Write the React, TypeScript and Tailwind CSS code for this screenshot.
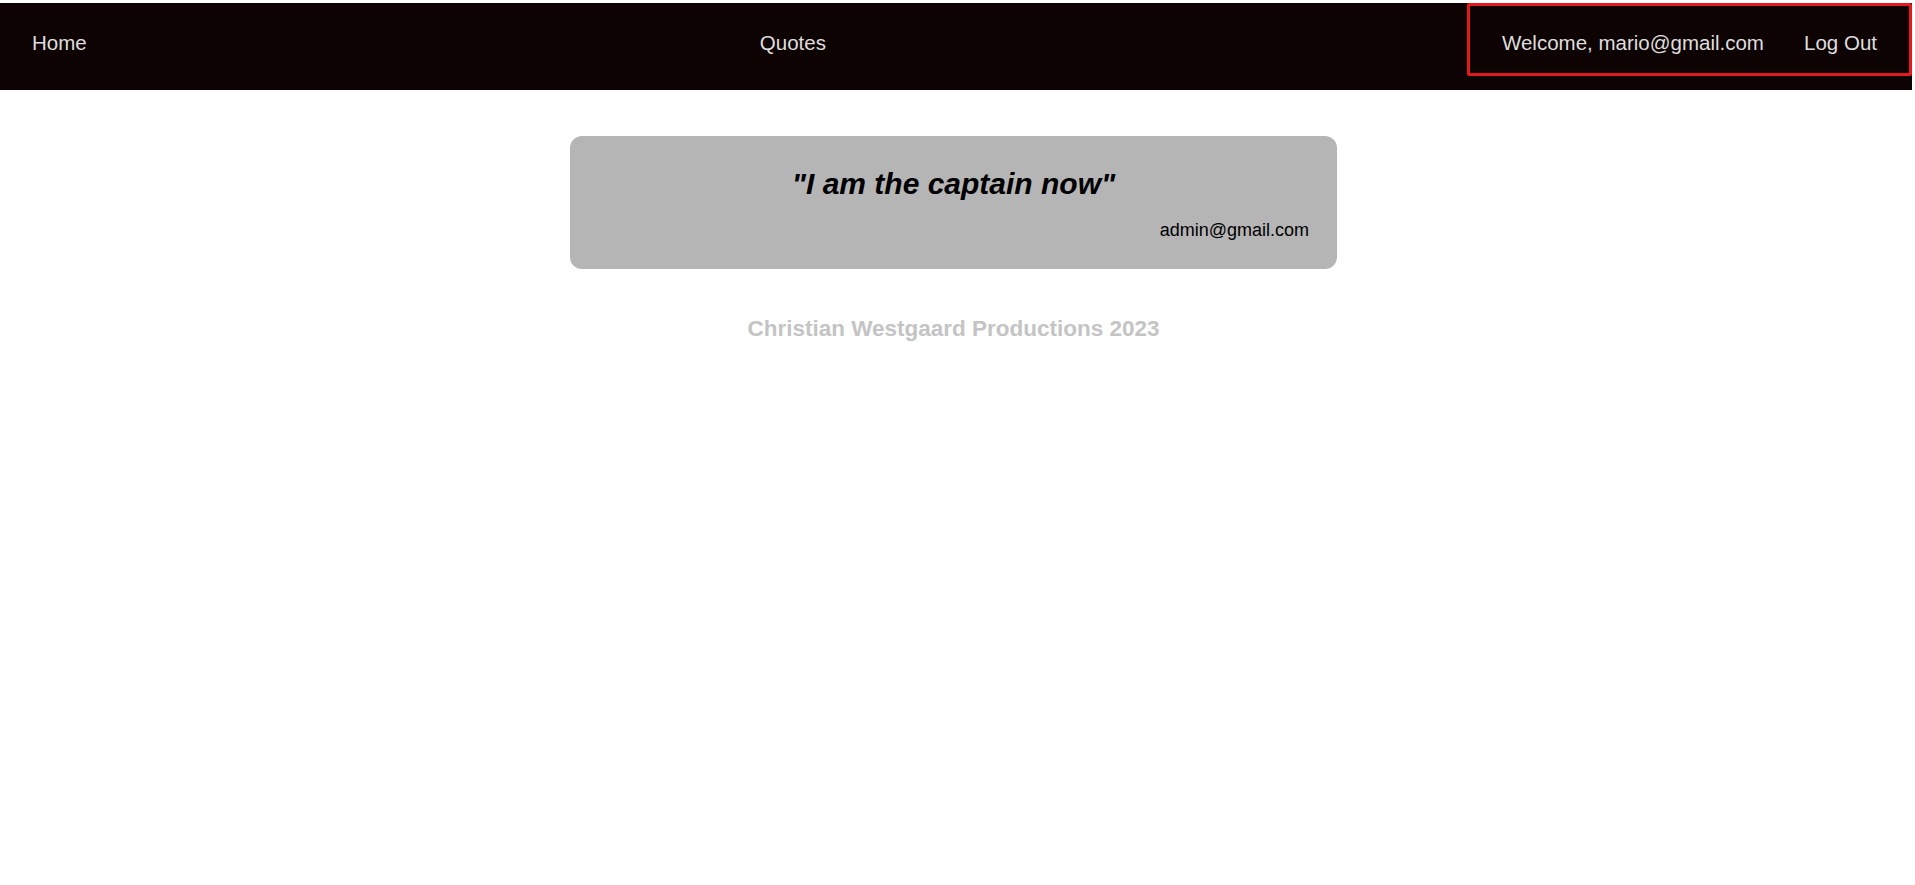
import { FC } from "react";

const font = { fontFamily: '"Liberation Sans", Arial, sans-serif' };

const Navbar: FC = () => {
  return (
    <nav className="mt-[3px] mr-[3px] h-[87px] bg-[#0e0303] flex justify-between items-start text-[20.5px] text-[#dedede]">
      <a className="px-8 h-[81px] flex items-center">Home</a>
      <a className="px-8 h-[81px] flex items-center">Quotes</a>
      <div className="h-[73px] w-[445px] border-[3px] border-[#e3191c] rounded-[2px] flex items-center justify-between px-8 pt-[8px]">
        <span>Welcome, mario@gmail.com</span>
        <a>Log Out</a>
      </div>
    </nav>
  );
};

const QuoteCard: FC<{ text: string; author: string }> = ({ text, author }) => {
  return (
    <div className="w-[767px] mx-auto bg-[#b5b5b5] rounded-[12px] pt-[31px] pb-[29px] px-7">
      <h2 className="text-center text-[30px] leading-[34px] font-bold italic text-black">
        "{text}"
      </h2>
      <p className="text-right text-[18px] leading-[20px] mt-[19px] text-black">{author}</p>
    </div>
  );
};

export default function App() {
  return (
    <div className="min-h-screen bg-white w-[1915px]" style={font}>
      <Navbar />
      <main className="pt-[46px] pr-[8px]">
        <QuoteCard text="I am the captain now" author="admin@gmail.com" />
        <footer className="text-center text-[22.5px] font-bold text-[#c4c4c4] mt-[43px]">
          Christian Westgaard Productions 2023
        </footer>
      </main>
    </div>
  );
}
